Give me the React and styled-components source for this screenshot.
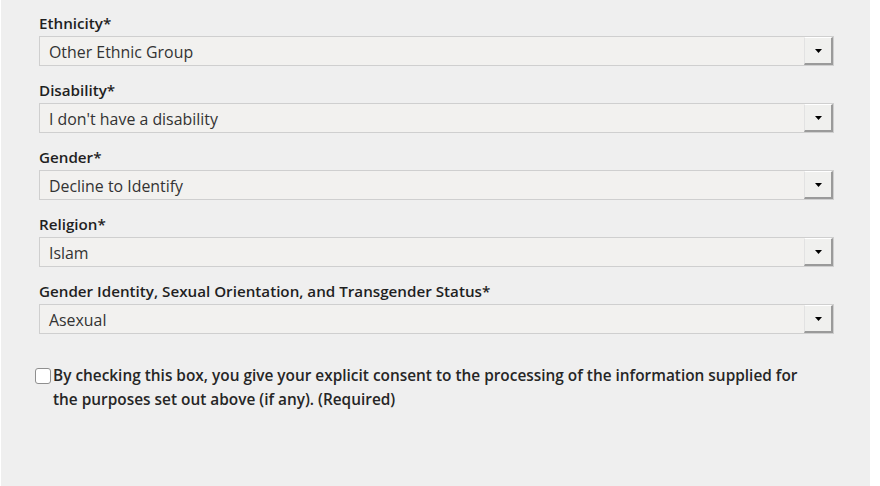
import React from "react";
import styled, { createGlobalStyle } from "styled-components";

const Global = createGlobalStyle`
  html, body { margin: 0; padding: 0; background: #ffffff; }
  #root { height: 486px; }
`;

const Panel = styled.div`
  box-sizing: border-box;
  margin-left: 1px;
  width: 869px;
  height: 486px;
  background: #efefef;
  padding: 13px 0 0 38px;
  font-family: "Open Sans", Lato, sans-serif;
  color: #222;
`;

const Field = styled.div`
  display: flex;
  flex-direction: column;
  gap: 3px;
  margin-bottom: 14px;
`;

const Label = styled.label`
  font-size: 15.2px;
  font-weight: 600;
  line-height: 20px;
  color: #1f1f1f;
`;

const SelectBox = styled.div`
  box-sizing: border-box;
  width: 795px;
  height: 30px;
  border: 1px solid #cfcfcf;
  background: #f2f1ef;
  display: flex;
  align-items: center;
`;

const Value = styled.span`
  flex: 1;
  padding-left: 9px;
  padding-top: 1px;
  font-size: 15.9px;
  color: #333;
`;

const Arrow = styled.span`
  box-sizing: border-box;
  width: 29px;
  height: 28px;
  background: #f0f0ee;
  border-left: 1px solid #e2e2e2;
  border-top: 1px solid #ffffff;
  border-right: 2px solid #9a9a9a;
  border-bottom: 2px solid #9a9a9a;
  display: flex;
  align-items: center;
  justify-content: center;
`;

const Consent = styled.div`
  display: flex;
  align-items: flex-start;
  margin-top: 30px;
  margin-left: -4px;
  width: 775px;
`;

const Check = styled.span`
  box-sizing: border-box;
  flex: none;
  width: 16px;
  height: 16px;
  margin-top: 4px;
  margin-right: 2px;
  border: 1px solid #8f8f8f;
  border-radius: 3px;
  background: #fff;
`;

const ConsentText = styled.span`
  font-size: 15.4px;
  font-weight: 600;
  line-height: 24px;
  color: #262626;
`;

const fields = [
  ["Ethnicity*", "Other Ethnic Group"],
  ["Disability*", "I don't have a disability"],
  ["Gender*", "Decline to Identify"],
  ["Religion*", "Islam"],
  ["Gender Identity, Sexual Orientation, and Transgender Status*", "Asexual"],
];

export default function App() {
  return (
    <>
      <Global />
      <Panel>
        {fields.map(([l, v]) => (
          <Field key={l}>
            <Label>{l}</Label>
            <SelectBox>
              <Value>{v}</Value>
              <Arrow>
                <svg width="7" height="4" viewBox="0 0 7 4">
                  <path d="M0 0h7L3.5 4z" fill="#000" />
                </svg>
              </Arrow>
            </SelectBox>
          </Field>
        ))}
        <Consent>
          <Check />
          <ConsentText>
            By checking this box, you give your explicit consent to the processing of the information supplied for the purposes set out above (if any). (Required)
          </ConsentText>
        </Consent>
      </Panel>
    </>
  );
}
